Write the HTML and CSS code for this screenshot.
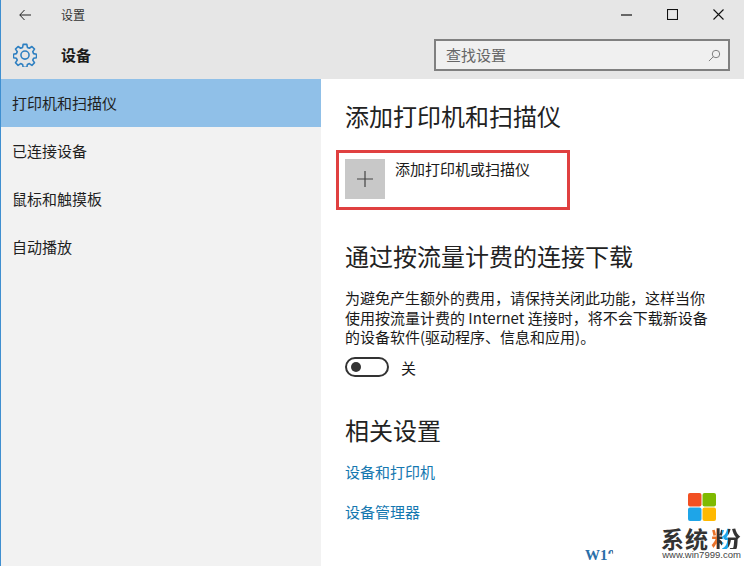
FILE: index.html
```html
<!DOCTYPE html>
<html lang="zh-CN">
<head>
  <meta charset="UTF-8" />
  <title>设置</title>
  <link rel="stylesheet" href="styles.css">
</head>
<body>
  <div class="window">
    <header class="header">
      <div class="titlebar">
        <svg class="back" width="12" height="12" viewBox="0 0 12 12"><path d="M5.500 1 .8 6l4.700 5M.8 6H12" fill="none" stroke="#222" stroke-width="1"/></svg>
        <span class="title">设置</span>
        <div class="win-btns">
          <svg width="11" height="11" viewBox="0 0 11 11"><path d="M0 6h11" stroke="#111" stroke-width="1.200"/></svg>
          <svg width="11" height="11" viewBox="0 0 11 11"><rect x=".5" y=".5" width="10" height="10" fill="none" stroke="#111" stroke-width="1.100"/></svg>
          <svg width="11" height="11" viewBox="0 0 11 11"><path d="M.5.5l10 10M10.500.5l-10 10" stroke="#111" stroke-width="1.100"/></svg>
        </div>
      </div>
      <div class="pagebar">
        <svg class="gear" width="24" height="24" viewBox="0 0 26 26">
          <path d="M11 1.500h4l.6 3.300 2.100.9 2.800-1.900 2.800 2.800-1.900 2.800.9 2.100 3.200.6v3.800l-3.200.6-.9 2.100 1.900 2.800-2.800 2.800-2.800-1.900-2.100.9-.6 3.200h-4l-.6-3.200-2.100-.9-2.800 1.900-2.800-2.800 1.900-2.800-.9-2.100-3.200-.6v-3.800l3.200-.6.9-2.100-1.900-2.800 2.800-2.800 2.800 1.900 2.100-.9z" fill="none" stroke="#2d7fc1" stroke-width="1.700" stroke-linejoin="round"/>
          <circle cx="13" cy="13.100" r="4.400" fill="none" stroke="#2d7fc1" stroke-width="1.700"/>
        </svg>
        <strong class="page-name">设备</strong>
        <div class="search">
          <span>查找设置</span>
          <svg width="13" height="13" viewBox="0 0 14 14"><circle cx="8.600" cy="5.400" r="4" fill="none" stroke="#777"/><path d="M5.700 8.300 1 13" stroke="#777"/></svg>
        </div>
      </div>
    </header>

    <div class="main">
      <nav class="sidebar">
        <a class="nav-item active">打印机和扫描仪</a>
        <a class="nav-item">已连接设备</a>
        <a class="nav-item">鼠标和触摸板</a>
        <a class="nav-item">自动播放</a>
      </nav>

      <section class="content">
        <h2 class="first">添加打印机和扫描仪</h2>
        <div class="add-box">
          <div class="add-icon">
            <svg width="18" height="18" viewBox="0 0 18 18"><path d="M9 1v16M1 9h16" stroke="#444" stroke-width="1.200"/></svg>
          </div>
          <span class="add-label">添加打印机或扫描仪</span>
        </div>

        <h2 class="metered">通过按流量计费的连接下载</h2>
        <p class="desc">为避免产生额外的费用，请保持关闭此功能，这样当你<br>使用按流量计费的 Internet 连接时，将不会下载新设备<br>的设备软件(驱动程序、信息和应用)。</p>
        <div class="toggle-row">
          <span class="toggle"><span class="knob"></span></span>
          <span>关</span>
        </div>

        <h2 class="related">相关设置</h2>
        <a class="link">设备和打印机</a>
        <a class="link">设备管理器</a>
      </section>
    </div>

    <div class="wm-text">W1<span class="wm-cut">0</span></div>
    <div class="watermark">
      <svg width="28" height="28" viewBox="0 0 28 28">
        <rect width="13.500" height="13.500" rx="2" fill="#f25022"/>
        <rect x="14.500" width="13.500" height="13.500" rx="2" fill="#7fba00"/>
        <rect y="14.500" width="13.500" height="13.500" rx="2" fill="#1ea5e8"/>
        <rect x="14.500" y="14.500" width="13.500" height="13.500" rx="2" fill="#ffb900"/>
      </svg>
      <div class="wm-name">系统<span class="wm-mark">粉</span></div>
      <div class="wm-url">www.win7999.com</div>
    </div>
  </div>
</body>
</html>
```

FILE: styles.css
```css
* {
  box-sizing: border-box;
}

html, body {
  margin: 0;
  height: 100%;
  overflow: hidden;
}

body {
  font-family: "Noto Sans CJK SC", "Liberation Sans", sans-serif;
  color: #1a1a1a;
  background: #fff;
}

.window {
  position: relative;
  width: 744px;
  height: 566px;
  border-left: 1px solid #3f8fd0;
  display: flex;
  flex-direction: column;
}

.header {
  height: 79px;
  background: #e6e6e6;
  flex-shrink: 0;
}

.titlebar {
  height: 29px;
  display: flex;
  align-items: center;
  padding-left: 18px;
}

.title {
  margin-left: 30px;
  font-size: 12px;
  color: #333;
}

.win-btns {
  margin-left: auto;
  padding-right: 20px;
  display: flex;
  gap: 35px;
}

.pagebar {
  height: 50px;
  display: flex;
  align-items: flex-start;
  padding-left: 12px;
}

.gear {
  margin-top: 14px;
}

.page-name {
  margin: 15px 0 0 24px;
  font-size: 15px;
  line-height: 22px;
}

.search {
  margin: 10px 14px 0 auto;
  width: 296px;
  height: 32px;
  border: 2px solid #808080;
  background: #f0f0f0;
  display: flex;
  align-items: center;
  justify-content: space-between;
  padding: 0 7px 0 10px;
  font-size: 15px;
  line-height: 24px;
  color: #666;
}

.main {
  flex: 1;
  display: flex;
  min-height: 0;
}

.sidebar {
  width: 320px;
  background: #f2f2f2;
  flex-shrink: 0;
}

.nav-item {
  display: block;
  height: 48px;
  line-height: 47px;
  padding-left: 11px;
  font-size: 15px;
  color: #1f1f1f;
}

.nav-item.active {
  background: #90c0e8;
}

.content {
  flex: 1;
  padding-left: 24px;
}

h2 {
  margin: 0;
  font-size: 24px;
  font-weight: 400;
  line-height: 32px;
  color: #222;
}

h2.first {
  margin-top: 21px;
}

.add-box {
  margin: 18px 0 0 -9px;
  width: 234px;
  height: 60px;
  border: 3px solid #e04040;
  padding: 6px 0 0 6px;
  display: flex;
  align-items: flex-start;
}

.add-icon {
  width: 40px;
  height: 40px;
  background: #c8c8c8;
  display: flex;
  align-items: center;
  justify-content: center;
}

.add-label {
  margin: 0 0 0 10px;
  font-size: 15px;
  line-height: 20px;
}

h2.metered {
  margin-top: 30px;
}

.desc {
  margin: 16px 0 0;
  font-size: 15px;
  line-height: 19.500px;
  width: 395px;
  white-space: nowrap;
}

.toggle-row {
  margin-top: 10px;
  display: flex;
  align-items: center;
  gap: 12px;
  font-size: 15px;
}

.toggle {
  width: 44px;
  height: 20px;
  border: 2px solid #333;
  border-radius: 10px;
  display: flex;
  align-items: center;
  padding-left: 4px;
}

.knob {
  width: 10px;
  height: 10px;
  border-radius: 50%;
  background: #333;
}

h2.related {
  margin-top: 36px;
}

.link {
  display: block;
  margin-top: 16px;
  font-size: 15px;
  line-height: 20px;
  color: #1478b0;
}

.link + .link {
  margin-top: 20px;
}

.wm-text {
  position: absolute;
  left: 584px;
  top: 547px;
  font-family: "Liberation Serif", serif;
  font-weight: 700;
  font-size: 15px;
  line-height: 17px;
  color: #2a6fa8;
}

.wm-cut {
  display: inline-block;
  clip-path: inset(0 25% 60% 0);
}

.watermark {
  position: absolute;
  left: 657px;
  top: 493px;
  width: 87px;
  display: flex;
  flex-direction: column;
  align-items: center;
}

.wm-name {
  margin-top: 6px;
  font-size: 23px;
  line-height: 22px;
  letter-spacing: 1px;
  font-weight: 700;
  color: #333;
  white-space: nowrap;
  align-self: flex-start;
  padding-left: 3px;
}

.wm-mark {
  display: inline-block;
  width: 33px;
  margin-left: 2px;
  letter-spacing: 0;
  transform: scaleX(1.3);
  transform-origin: left;
  background: linear-gradient(90deg, #e8722a 0 14%, #333 14% 26%, #1ea5e8 26% 40%, #333 40%);
  -webkit-background-clip: text;
  background-clip: text;
  color: transparent;
}

.wm-url {
  font-family: "Liberation Sans", sans-serif;
  font-size: 9.500px;
  line-height: 11px;
  color: #444;
  white-space: nowrap;
}
```
